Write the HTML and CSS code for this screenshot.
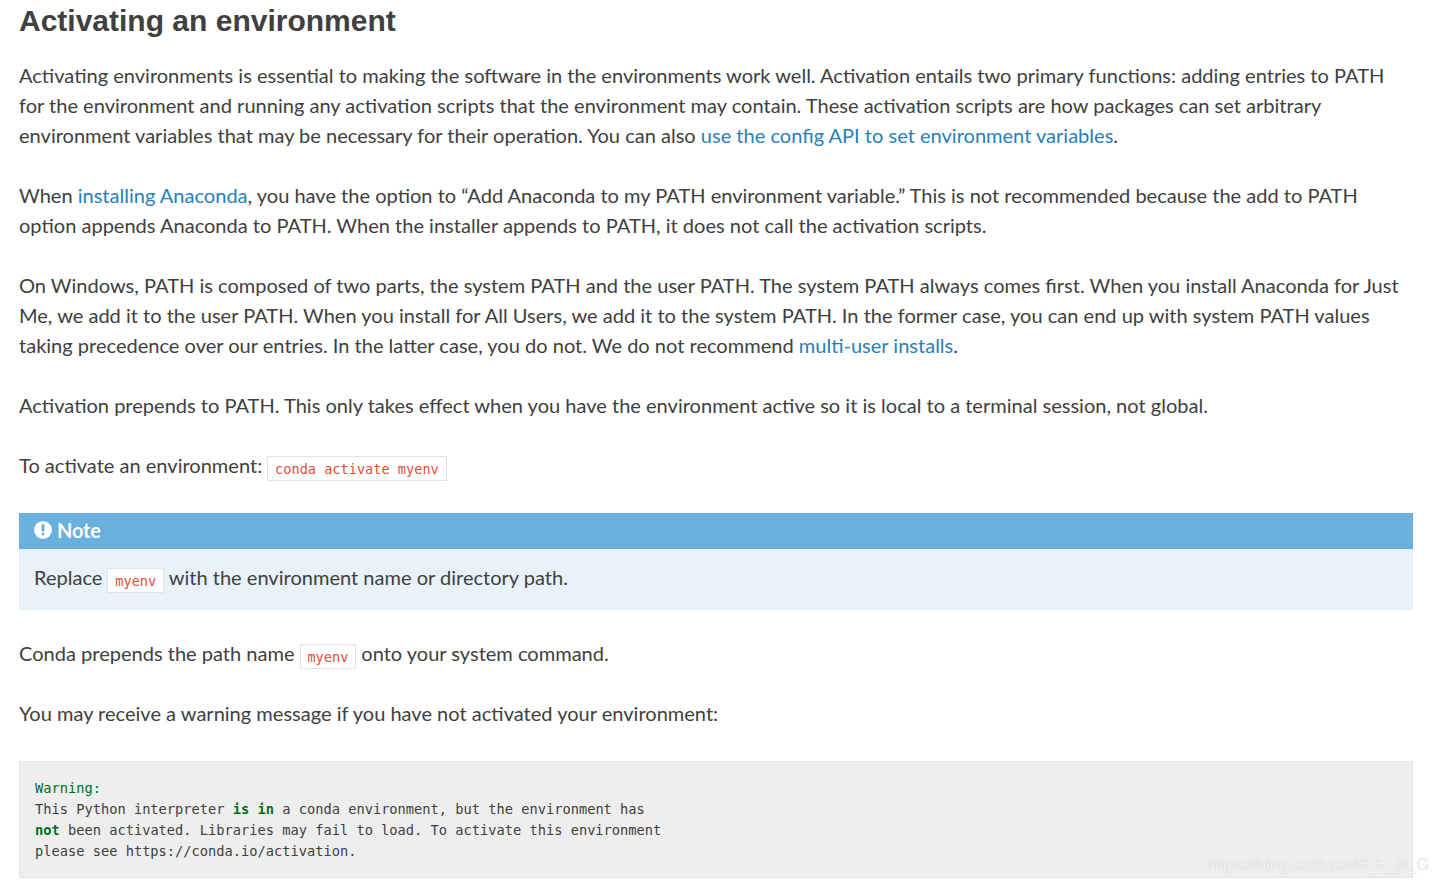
FILE: index.html
```html
<!DOCTYPE html>
<html lang="en">
<head>
<meta charset="utf-8">
<title>Activating an environment</title>
<link rel="stylesheet" href="styles.css">
</head>
<body>
<main class="doc">
<h2>Activating an environment</h2>
<p>Activating environments is essential to making the software in the environments work well. Activation entails two primary functions: adding entries to PATH for the environment and running any activation scripts that the environment may contain. These activation scripts are how packages can set arbitrary environment variables that may be necessary for their operation. You can also <a href="#">use the config API to set environment variables</a>.</p>
<p>When <a href="#">installing Anaconda</a>, you have the option to “Add Anaconda to my PATH environment variable.” This is not recommended because the add to PATH option appends Anaconda to PATH. When the installer appends to PATH, it does not call the activation scripts.</p>
<p>On Windows, PATH is composed of two parts, the system PATH and the user PATH. The system PATH always comes first. When you install Anaconda for Just Me, we add it to the user PATH. When you install for All Users, we add it to the system PATH. In the former case, you can end up with system PATH values taking precedence over our entries. In the latter case, you do not. We do not recommend <a href="#">multi-user installs</a>.</p>
<p>Activation prepends to PATH. This only takes effect when you have the environment active so it is local to a terminal session, not global.</p>
<p>To activate an environment: <code>conda activate myenv</code></p>
<div class="note">
<div class="note-title"><svg class="note-icon" viewBox="0 0 18 18" width="18" height="18"><circle cx="9" cy="9" r="9" fill="#fff"/><rect x="7.5" y="3.2" width="3" height="7.4" rx="1" fill="#6ab0de"/><circle cx="9" cy="13" r="1.6" fill="#6ab0de"/></svg>Note</div>
<p>Replace <code>myenv</code> with the environment name or directory path.</p>
</div>
<p>Conda prepends the path name <code>myenv</code> onto your system command.</p>
<p>You may receive a warning message if you have not activated your environment:</p>
<pre class="block"><span class="name">Warning:</span>
This Python interpreter <b>is</b> <b>in</b> a conda environment, but the environment has
<b>not</b> been activated. Libraries may fail to load. To activate this environment
please see https://conda.io/activation.</pre>
</main>
<div class="mark">https://blog.csdn.net/B_E_N_G</div>
</body>
</html>
```
FILE: styles.css
```css
html, body { margin: 0; padding: 0; }
body { height: 883px; overflow: hidden; background: #fff; color: #404040; font-family: Lato, sans-serif; font-size: 20.04px; line-height: 30px; position: relative; }
.doc { padding: 0 24px 0 19px; margin-top: -3px; }
h2 { margin: 0 0 21px; padding-top: 6px; font-family: "Liberation Sans", Arial, sans-serif; font-size: 30px; line-height: 36px; font-weight: 700; color: #404040; }
p { margin: 0 0 30px; }
a { color: #2980b9; text-decoration: none; }
code { font-family: "DejaVu Sans Mono", monospace; font-size: 13.6px; line-height: 1; color: #e74c3c; background: #fff; border: 1px solid #e1e4e5; padding: 4px 6.8px 3px; white-space: nowrap; vertical-align: -1px; }
.note { background: #e7f2fa; margin: 33px 0 28px; padding: 0 15px 18px; }
.note-title { background: #6ab0de; color: #fff; font-weight: 700; margin: 0 -15px 13px; padding: 2px 15px 4px; height: 30px; display: flex; align-items: center; gap: 5px; font-size: 20px; letter-spacing: -0.2px; }
.note-icon { flex: none; }
.note p { margin: 0; }
.block { margin: 33px 0 0; padding: 16px 15px 15px; background: #eeeeee; border: 1px solid #e1e4e5; font-family: "DejaVu Sans Mono", monospace; font-size: 13.7px; line-height: 21px; color: #404040; }
.block b { color: #007020; font-weight: 700; }
.name { color: #007020; }
.mark { position: absolute; right: 8px; bottom: 7px; color: rgba(255,255,255,.85); font-family: "Liberation Sans", Arial, sans-serif; font-size: 16px; line-height: 22px; text-shadow: 0 0 1px rgba(150,150,150,.6); }
```
